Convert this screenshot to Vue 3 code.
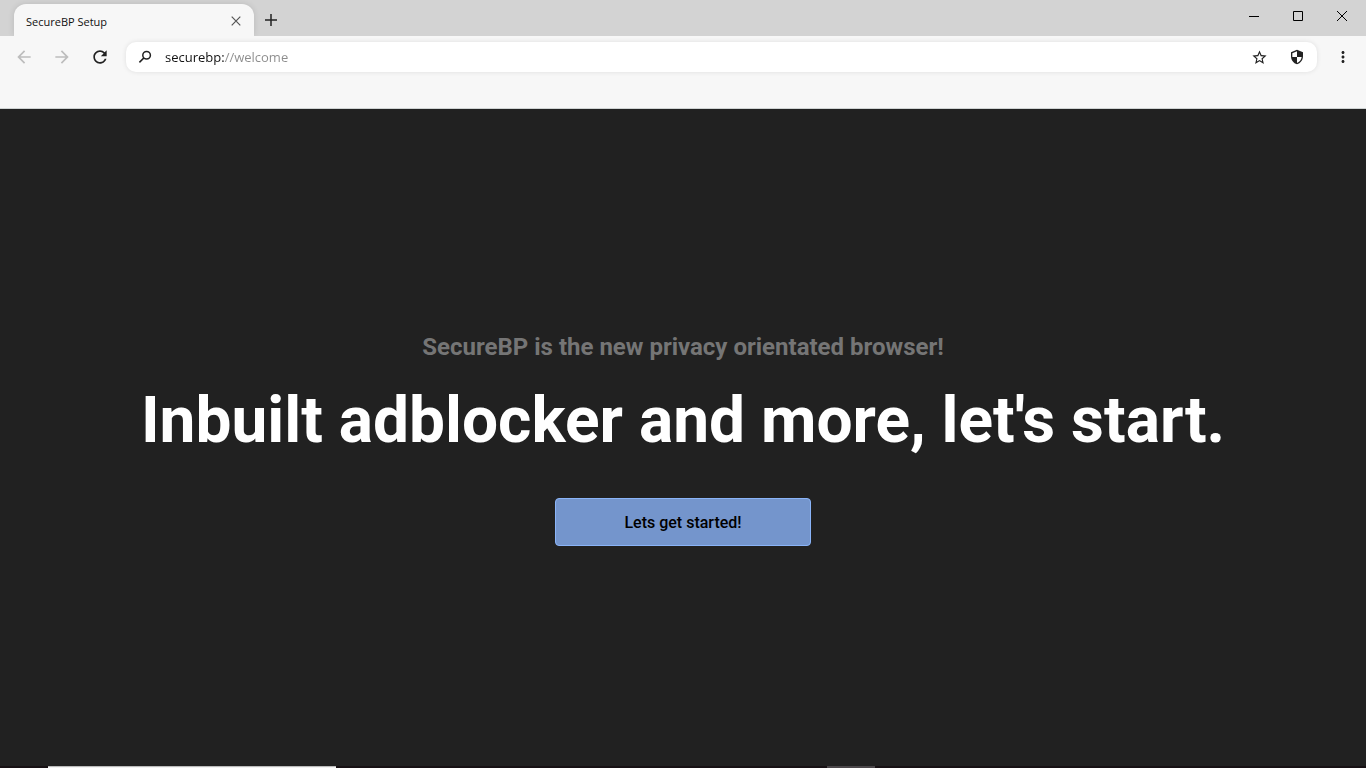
<template>
  <div class="window">
    <header class="titlebar">
      <div class="tab">
        <span class="tab-title">SecureBP Setup</span>
        <button class="tab-close" aria-label="Close tab">
          <svg width="10" height="10" viewBox="0 0 10 10"><path d="M.7.7l8.6 8.6M9.3.7L.7 9.3" stroke="#555" stroke-width="1.2" fill="none" /></svg>
        </button>
      </div>
      <button class="new-tab" aria-label="New tab">
        <svg width="12" height="12" viewBox="0 0 12 12"><path d="M6 0v12M0 6h12" stroke="#222" stroke-width="1.5" fill="none" /></svg>
      </button>
      <div class="window-controls">
        <button aria-label="Minimize">
          <svg width="10" height="10" viewBox="0 0 10 10"><path d="M0 5.5h10" stroke="#000" /></svg>
        </button>
        <button aria-label="Maximize">
          <svg width="10" height="10" viewBox="0 0 10 10"><path d="M.5.5h9v9h-9z" stroke="#000" fill="none" /></svg>
        </button>
        <button aria-label="Close">
          <svg width="10" height="10" viewBox="0 0 10 10"><path d="M0 0l10 10M10 0L0 10" stroke="#000" fill="none" /></svg>
        </button>
      </div>
    </header>

    <nav class="toolbar">
      <button v-for="item in navButtons" :key="item.label" :class="['nav-button', { disabled: item.disabled }]" :disabled="item.disabled" :aria-label="item.label">
        <svg width="20" height="20" viewBox="0 0 24 24"><path :d="item.icon" /></svg>
      </button>
      <div class="address-bar">
        <label class="search-icon" for="address" aria-label="Address">
          <svg width="14" height="14" viewBox="0 0 14 14"><circle cx="8.6" cy="5.2" r="3.8" /><path d="M5.9 7.9L1.4 12.4" /></svg>
        </label>
        <input id="address" v-model="address" class="address" type="text" spellcheck="false" />
        <button class="bar-button" aria-label="Bookmark this page">
          <svg width="17" height="17" viewBox="0 0 24 24"><path d="M22 9.24l-7.19-.62L12 2 9.19 8.63 2 9.24l5.46 4.73L5.82 21 12 17.27 18.18 21l-1.63-7.03L22 9.24zM12 15.4l-3.76 2.27 1-4.28-3.32-2.88 4.38-.38L12 6.1l1.71 4.04 4.38.38-3.32 2.88 1 4.28L12 15.4z" /></svg>
        </button>
        <button class="bar-button" aria-label="Shields">
          <svg width="16" height="16" viewBox="0 0 24 24"><path d="M12 1L3 5v6c0 5.55 3.84 10.74 9 12 5.16-1.26 9-6.45 9-12V5l-9-4zm0 10.99h7c-.53 4.12-3.28 7.79-7 8.94V12H5V6.3l7-3.11v8.8z" /></svg>
        </button>
      </div>
      <button class="menu-button" aria-label="Menu">
        <svg width="18" height="18" viewBox="0 0 24 24"><path d="M12 8c1.1 0 2-.9 2-2s-.9-2-2-2-2 .9-2 2 .9 2 2 2zm0 2c-1.1 0-2 .9-2 2s.9 2 2 2 2-.9 2-2-.9-2-2-2zm0 6c-1.1 0-2 .9-2 2s.9 2 2 2 2-.9 2-2-.9-2-2-2z" /></svg>
      </button>
    </nav>

    <main class="page">
      <h2 class="subtitle">SecureBP is the new privacy orientated browser!</h2>
      <h1 class="title">Inbuilt adblocker and more, let's start.</h1>
      <button class="start">Lets get started!</button>
    </main>

    <footer class="taskbar">
      <div class="task-search"></div>
      <div class="task-active"></div>
    </footer>
  </div>
</template>

<script setup>
import { ref } from "vue";

const address = ref("securebp://welcome");

const navButtons = [
  { label: "Back", disabled: true, icon: "M20 11H7.83l5.59-5.59L12 4l-8 8 8 8 1.41-1.41L7.83 13H20v-2z" },
  { label: "Forward", disabled: true, icon: "M12 4l-1.41 1.41L16.17 11H4v2h12.17l-5.58 5.59L12 20l8-8z" },
  { label: "Reload", disabled: false, icon: "M17.65 6.35C16.2 4.9 14.21 4 12 4c-4.42 0-7.99 3.58-7.99 8s3.57 8 7.99 8c3.73 0 6.84-2.55 7.73-6h-2.08c-.82 2.33-3.04 4-5.65 4-3.31 0-6-2.69-6-6s2.69-6 6-6c1.66 0 3.14.69 4.22 1.78L13 11h7V4l-2.35 2.35z" },
];
</script>

<style>
body {
  margin: 0;
  background: #212121;
}
</style>

<style scoped>
.window {
  display: flex;
  flex-direction: column;
  min-height: 100vh;
  font-family: "Open Sans", "Noto Sans", sans-serif;
}

button {
  display: flex;
  align-items: center;
  justify-content: center;
  padding: 0;
  border: 0;
  background: none;
}

.titlebar {
  display: flex;
  height: 36px;
  padding: 0 2px 0 14px;
  background: #d3d3d3;
}

.tab {
  display: flex;
  align-items: center;
  justify-content: space-between;
  box-sizing: border-box;
  width: 240px;
  margin-top: 4px;
  padding: 2px 12px 0;
  border-radius: 12px 12px 0 0;
  background: #f7f7f7;
  box-shadow: 0 0 6px rgba(0, 0, 0, 0.12);
  font-size: 11px;
  color: #111;
}

.tab-close {
  width: 12px;
  height: 16px;
}

.new-tab {
  width: 34px;
  height: 40px;
}

.window-controls {
  display: flex;
  margin-left: auto;
}

.window-controls button {
  width: 44px;
  height: 32px;
}

.toolbar {
  position: relative;
  display: flex;
  align-items: flex-start;
  padding: 6px 14px 36px 12px;
  border-bottom: 1px solid #cfd3d3;
  background: #f7f7f7;
}

.nav-button {
  width: 24px;
  height: 30px;
  margin-right: 14px;
  fill: #222;
}

.nav-button.disabled {
  fill: #bdbdbd;
}

.address-bar {
  display: flex;
  flex: 1;
  align-items: center;
  height: 30px;
  padding: 0 12px;
  border-radius: 10px;
  background: #fff;
  box-shadow: 0 0 5px rgba(0, 0, 0, 0.1);
}

.search-icon {
  display: flex;
  width: 27px;
}

.search-icon svg {
  fill: none;
  stroke: #222;
  stroke-width: 1.5;
}

/* the scheme is dark, the rest of the address is grey */
.address {
  flex: 1;
  min-width: 0;
  padding: 0;
  border: 0;
  outline: 0;
  background: linear-gradient(90deg, #111 60px, #8c8c8c 60px);
  -webkit-background-clip: text;
  background-clip: text;
  color: transparent;
  font-family: inherit;
  font-size: 13px;
}

.bar-button {
  width: 17px;
  height: 30px;
  margin-left: 20px;
  fill: #222;
}

.menu-button {
  width: 18px;
  height: 30px;
  margin-left: 17px;
  fill: #222;
}

.page {
  display: flex;
  flex: 1;
  flex-direction: column;
  align-items: center;
  justify-content: center;
  padding-top: 4px;
  background: #212121;
  font-family: Roboto, sans-serif;
}

.subtitle {
  margin: 0;
  font-size: 24px;
  line-height: 28px;
  font-weight: 700;
  color: #757575;
}

.title {
  margin: 20px 0 37px;
  font-size: 64px;
  line-height: 80px;
  font-weight: 700;
  color: #fff;
  text-align: center;
}

.start {
  width: 256px;
  height: 48px;
  border: 1px solid #8ab4f8;
  border-radius: 4px;
  background: #7495cc;
  font-family: Roboto, sans-serif;
  font-size: 16px;
  font-weight: 500;
  color: #000;
}

.taskbar {
  display: flex;
  height: 2px;
  padding-left: 48px;
  background: #171114;
}

.task-search {
  box-sizing: border-box;
  width: 288px;
  border-top: 1px solid #bbb;
  background: #f3f3f3;
}

.task-active {
  width: 48px;
  margin-left: 491px;
  background: #4b474a;
}
</style>
